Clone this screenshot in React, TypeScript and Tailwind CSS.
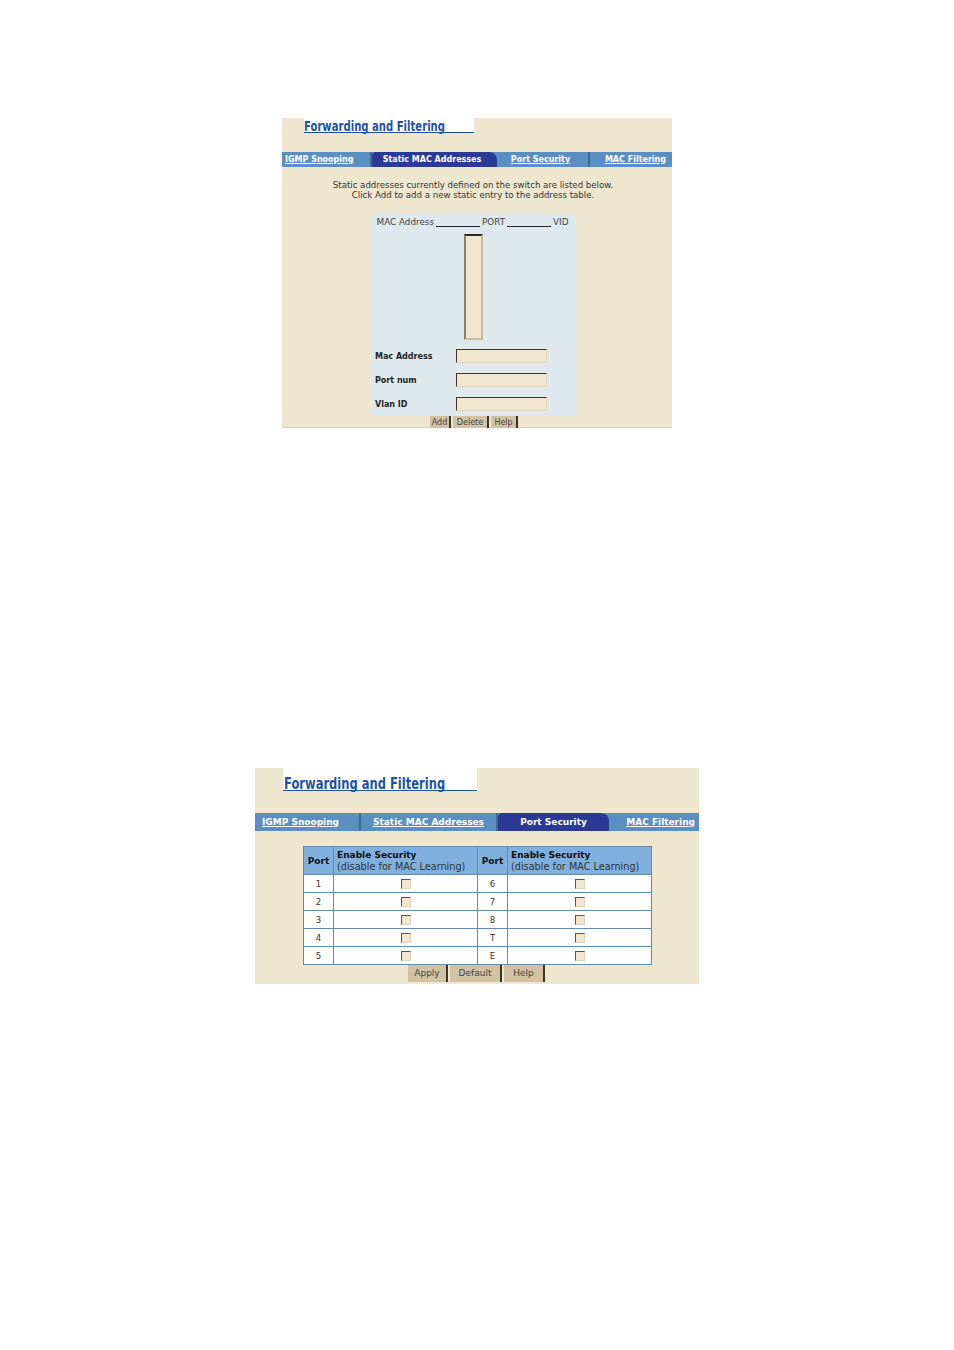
const font = "font-['DejaVu_Sans',sans-serif]";

type Tab = { label: string; width: string; align: string; active?: boolean; last?: boolean };

const topTabs: Tab[] = [
  { label: "IGMP Snooping", width: "w-[90px]", align: "justify-start pl-[3px]" },
  { label: "Static MAC Addresses", width: "w-[125px]", align: "justify-center pr-[5px]", active: true },
  { label: "Port Security", width: "w-[93px]", align: "justify-center pr-[4px]" },
  { label: "MAC Filtering", width: "w-[82px]", align: "justify-end pr-[6px]", last: true },
];

const bottomTabs: Tab[] = [
  { label: "IGMP Snooping", width: "w-[106px]", align: "justify-start pl-[7px] pt-px" },
  { label: "Static MAC Addresses", width: "w-[137px]", align: "justify-center pt-px" },
  { label: "Port Security", width: "w-[111px]", align: "justify-center pt-px", active: true },
  { label: "MAC Filtering", width: "w-[90px]", align: "justify-end pr-[4px] pt-px", last: true },
];

function TabBar({ tabs, big }: { tabs: Tab[]; big?: boolean }) {
  return (
    <div className={`flex bg-[#5b8fc4] ${big ? "h-[18px]" : "h-[15px]"}`}>
      {tabs.map((tab) => (
        <div
          key={tab.label}
          className={`flex items-center whitespace-nowrap font-bold ${tab.align} ${big ? "text-[9px]" : "text-[8px]"} ${tab.width} ${
            tab.active
              ? "rounded-tl-sm rounded-tr-lg bg-[#2b3a94] text-white"
              : tab.last
                ? "text-white underline"
                : "border-r-2 border-[#3f6a96] text-white underline"
          }`}
        >
          {tab.label}
        </div>
      ))}
    </div>
  );
}

function Title({ big }: { big?: boolean }) {
  return (
    <div
      className={`flex items-end border-b border-[#1f4f96] bg-white font-bold text-[#1f52a3] ${
        big ? "ml-[28px] h-[23px] w-[194px] pl-px text-[16px] leading-[13px]" : "ml-[22px] h-[15px] w-[170px] text-[14px] leading-[11px]"
      }`}
    >
      <span className="origin-left scale-x-[0.72] whitespace-nowrap">Forwarding and Filtering</span>
    </div>
  );
}

function Field({ label }: { label: string }) {
  return (
    <div className="flex h-[24px] items-center">
      <div className="w-[84px] pl-[3px] pt-px text-[8px] font-bold text-[#222]">{label}</div>
      <div className="h-[14px] w-[91px] border border-[#e3d9bf] border-l-[#3a3428] border-t-[#3a3428] bg-[#f2e6cf]" />
    </div>
  );
}

function Button({ label, className }: { label: string; className: string }) {
  return (
    <div
      className={`flex items-center justify-center border-r-2 border-r-[#3a3428] bg-[#d0c2a3] pt-px text-[#444] ${className}`}
    >
      {label}
    </div>
  );
}

function Check() {
  return (
    <div className="mx-auto h-[10px] w-[10px] border border-[#ddd3bc] border-l-[#5a5448] border-t-[#5a5448] bg-[#f2e6cf]" />
  );
}

const rows = [
  ["1", "6"],
  ["2", "7"],
  ["3", "8"],
  ["4", "T"],
  ["5", "E"],
];

function SecurityTable() {
  return (
    <table className="ml-[48px] mt-[15px] w-[348px] table-fixed border-collapse border border-[#5f8cab] text-[#333]">
      <colgroup>
        <col className="w-[30px]" />
        <col className="w-[144px]" />
        <col className="w-[30px]" />
        <col className="w-[144px]" />
      </colgroup>
      <thead>
        <tr className="h-[28px] bg-[#7fb0de] text-left text-[9px] leading-[12px]">
          {[0, 1].map((i) => [
            <th key={`p${i}`} className="border border-[#5f8cab] text-center font-bold text-[#111]">
              Port
            </th>,
            <th key={`e${i}`} className="border border-[#5f8cab] pl-[3px] font-normal">
              <div className="font-bold text-[#111]">Enable Security</div>
              <div className="whitespace-nowrap text-[9.7px]">(disable for MAC Learning)</div>
            </th>,
          ])}
        </tr>
      </thead>
      <tbody>
        {rows.map(([a, b]) => (
          <tr key={a} className="h-[18px] bg-white text-center text-[8.5px]">
            <td className="border border-[#5f8cab] pt-px">{a}</td>
            <td className="border border-[#5f8cab]">
              <Check />
            </td>
            <td className="border border-[#5f8cab] pt-px">{b}</td>
            <td className="border border-[#5f8cab]">
              <Check />
            </td>
          </tr>
        ))}
      </tbody>
    </table>
  );
}

export default function App() {
  return (
    <div className={`h-[1350px] w-[954px] overflow-hidden bg-white pt-[118px] ${font}`}>
      <div className="ml-[282px] h-[310px] w-[390px] border-b border-[#d8cfb8] bg-[#efe6cf]">
        <Title />
        <div className="h-[19px]" />
        <TabBar tabs={topTabs} />
        <div className="mt-[13px] pr-[8px] text-center text-[8.6px] leading-[10px] text-[#333]">
          <div>Static addresses currently defined on the switch are listed below.</div>
          <div>Click Add to add a new static entry to the address table.</div>
        </div>
        <div className="ml-[90px] mt-[13px] h-[203px] w-[204px] bg-[#dfe9ed]">
          <div className="flex h-[21px] items-center justify-center gap-[2px] pb-[2px] pr-[3px] text-[8.8px] text-[#444]">
            <span>MAC Address</span>
            <span className="mt-[7px] h-px w-[44px] bg-[#222]" />
            <span>PORT</span>
            <span className="mt-[7px] h-px w-[44px] bg-[#222]" />
            <span>VID</span>
          </div>
          <div className="ml-[92px] h-[106px] w-[19px] border-2 border-[#c9bd9f] border-l-[#8a8270] border-t-[#2e2a20] bg-[#f2e6cf]" />
          <div className="mt-[4px]">
            <Field label="Mac Address" />
            <Field label="Port num" />
            <Field label="Vlan ID" />
          </div>
        </div>
        <div className="ml-[148px] flex h-[12px] gap-[2px] text-[8px]">
          <Button label="Add" className="w-[21px]" />
          <Button label="Delete" className="w-[36px]" />
          <Button label="Help" className="w-[27px]" />
        </div>
      </div>

      <div className="ml-[255px] mt-[340px] h-[216px] w-[444px] bg-[#efe6cf]">
        <Title big />
        <div className="h-[22px]" />
        <TabBar tabs={bottomTabs} big />
        <SecurityTable />
        <div className="ml-[153px] flex h-[17px] gap-[2px] text-[9px]">
          <Button label="Apply" className="w-[40px]" />
          <Button label="Default" className="w-[52px]" />
          <Button label="Help" className="w-[41px]" />
        </div>
      </div>
    </div>
  );
}
